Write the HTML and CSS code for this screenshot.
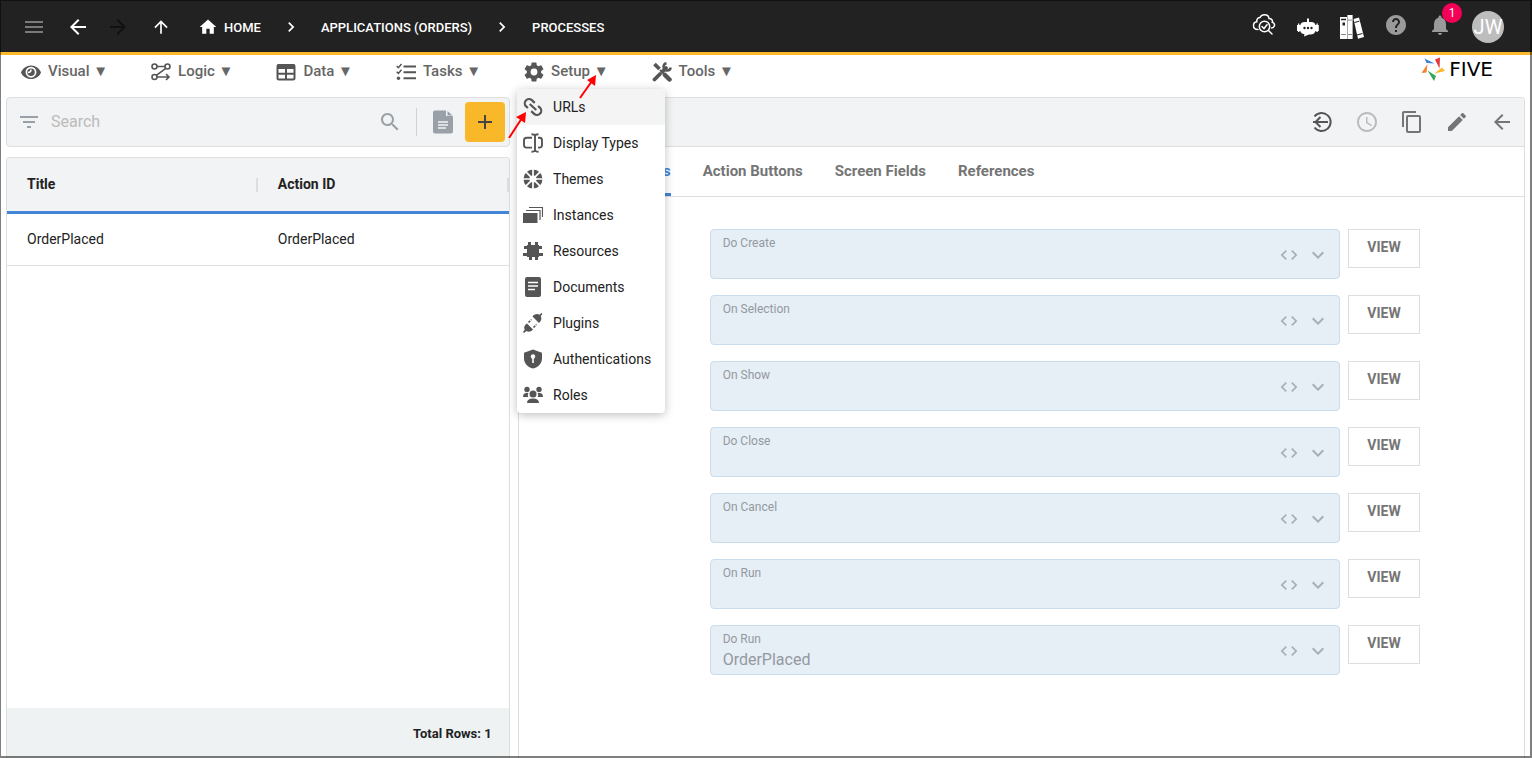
FILE: index.html
```html
<!DOCTYPE html>
<html lang="en">
<head>
    <meta charset="UTF-8">
    <meta name="viewport" content="width=device-width, initial-scale=1.0">
    <title>Processes</title>
    <link rel="stylesheet" href="styles.css">
</head>
<body>

    <!-- Shared icons -->
    <svg class="sprite" aria-hidden="true">
        <symbol id="i-back" viewBox="0 0 24 24"><path d="M20 11H7.83l5.59-5.59L12 4l-8 8 8 8 1.41-1.41L7.83 13H20v-2z"/></symbol>
        <symbol id="i-chevron" viewBox="0 0 24 24"><path d="M10 6L8.59 7.41 13.17 12l-4.58 4.59L10 18l6-6z"/></symbol>
        <symbol id="i-code" viewBox="0 0 24 24"><path d="M9.4 16.6L4.8 12l4.6-4.6L8 6l-6 6 6 6 1.4-1.4zm5.2 0l4.6-4.6-4.6-4.6L16 6l6 6-6 6-1.4-1.4z"/></symbol>
        <symbol id="i-expand" viewBox="0 0 24 24"><path d="M16.59 8.59L12 13.17 7.41 8.59 6 10l6 6 6-6z"/></symbol>
    </svg>

    <header class="topbar">
        <button class="top-btn dim" aria-label="Menu"><svg class="icon24" viewBox="0 0 24 24"><path d="M3 18h18v-2H3v2zm0-5h18v-2H3v2zm0-7v2h18V6H3z"/></svg></button>
        <button class="top-btn" aria-label="Back"><svg class="icon24"><use href="#i-back"/></svg></button>
        <button class="top-btn narrow off" aria-label="Forward"><svg class="icon24" viewBox="0 0 24 24"><path d="M12 4l-1.41 1.41L16.17 11H4v2h12.17l-5.58 5.59L12 20l8-8z"/></svg></button>
        <button class="top-btn wide" aria-label="Up"><svg class="icon20" viewBox="0 0 24 24"><path d="M4 12l1.41 1.41L11 7.83V20h2V7.83l5.58 5.59L20 12l-8-8-8 8z"/></svg></button>
        <nav class="crumbs">
            <a class="crumb" href="#"><svg class="icon20" viewBox="0 0 24 24"><path d="M10 20v-6h4v6h5v-8h3L12 3 2 12h3v8z"/></svg>HOME</a>
            <svg class="icon20"><use href="#i-chevron"/></svg>
            <a class="crumb" href="#">APPLICATIONS (ORDERS)</a>
            <svg class="icon20"><use href="#i-chevron"/></svg>
            <a class="crumb" href="#">PROCESSES</a>
        </nav>
        <div class="top-actions">
            <button class="top-btn raised" aria-label="Inspect">
                <svg class="icon24" viewBox="0 0 24 24"><g fill="none" stroke="currentColor" stroke-width="1.5" stroke-linecap="round">
                    <path d="M6 16.500C3 16.500 1.500 14.500 1.500 12.500 1.500 10.500 3 9 4.800 8.800 4.500 6 6 4.500 8 4.500 9 2.500 10.500 1.700 12.500 1.700 15 1.700 16.800 3.300 17 5.500 19.500 5.500 21 7.500 20.300 9.300 22.500 10 23 12 22 13.500 21.500 14.500 20.500 15 19.500 15"/>
                    <circle cx="12.500" cy="13.500" r="5.200"/><path d="M16.500 17.500L20 21M10 13.500l2 2 3-3.800"/></g></svg>
            </button>
            <button class="top-btn" aria-label="Assistant">
                <svg class="icon24" viewBox="0 0 24 24"><path d="M11 3.500h2V7h2.500c2.200 0 3.500 1.300 4 3h1v-1.500h1.300V10h1v6h-1v1h-1.500v-1h-.8c-.7 2.500-2.500 3.500-5 3.500H13l-5 2 .500-2.300C6 18.900 4.800 18 4.300 16h-.8v1H2v-1H1v-6h1V8.500h1.300V10h1c.5-1.700 2-3 4.200-3H11z"/><g fill="#222"><circle cx="8.500" cy="13" r="1.200"/><circle cx="12" cy="13" r="1.200"/><circle cx="15.500" cy="13" r="1.200"/></g></svg>
            </button>
            <button class="top-btn" aria-label="Library">
                <svg class="icon24" viewBox="0 0 24 24"><path d="M0 2h7v22H0z"/><path d="M7 0h6v24H7z" fill="#aaa"/><path d="M8 0h4v24H8z"/><path d="M13.500 4l5.500-1.500 5 19.500-6 1.700z"/><g fill="none" stroke="#222"><path d="M1 4.500h5" stroke-width="1.500"/><path d="M1 19.500h5M8 5h4M8 19.500h4" stroke="#888"/><path d="M14.300 7.500l5-1.300M17 20l5.500-1.500"/></g><path d="M2.500 7.500h2.500v3H2.500z" fill="#222"/></svg>
            </button>
            <button class="top-btn mid raised" aria-label="Help"><svg class="icon24" viewBox="0 0 24 24"><path d="M12 2C6.480 2 2 6.480 2 12s4.480 10 10 10 10-4.480 10-10S17.520 2 12 2zm1 17h-2v-2h2v2zm2.070-7.750l-.9.920C13.450 12.900 13 13.500 13 15h-2v-.5c0-1.100.45-2.100 1.170-2.830l1.240-1.260c.37-.36.59-.86.59-1.410 0-1.100-.9-2-2-2s-2 .9-2 2H8c0-2.210 1.790-4 4-4s4 1.790 4 4c0 .88-.36 1.680-.93 2.250z"/></svg></button>
            <button class="top-btn mid raised" aria-label="Notifications">
                <svg class="icon24" viewBox="0 0 24 24"><path d="M12 22c1.100 0 2-.9 2-2h-4c0 1.100.89 2 2 2zm6-6v-5c0-3.070-1.640-5.640-4.500-6.320V4c0-.83-.67-1.500-1.500-1.500s-1.500.67-1.500 1.500v.68C7.630 5.360 6 7.920 6 11v5l-2 2v1h16v-1l-2-2z"/></svg>
                <span class="badge">1</span>
            </button>
            <button class="avatar">JW</button>
        </div>
    </header>

    <nav class="menubar">
        <button class="menu-btn">
            <svg class="icon20" viewBox="0 0 20 20"><path d="M10 3.500C5.500 3.500 1.500 6.500 0 10.500c1.500 4 5.500 6.500 10 6.500s8.500-2.500 10-6.500C18.500 6.500 14.500 3.500 10 3.500z"/><circle cx="10" cy="10.200" r="4.600" fill="none" stroke="#fff" stroke-width="1.700"/><path d="M10 7.500a3 3 0 0 1-3 3" fill="none" stroke="#fff" stroke-width="1.500"/></svg>
            <span>Visual ▼</span>
        </button>
        <button class="menu-btn">
            <svg class="icon20" viewBox="0 0 20 20"><g fill="none" stroke="currentColor" stroke-width="1.600"><circle cx="3.500" cy="4.500" r="2.500"/><circle cx="16.500" cy="4.500" r="2.500"/><circle cx="3.500" cy="15" r="2.500"/><path d="M6 4.500h8M14.800 6.300L5.300 13.300M6 15h12M15 12l3 3-3 3"/></g></svg>
            <span>Logic ▼</span>
        </button>
        <button class="menu-btn">
            <svg class="icon20" viewBox="0 0 20 20"><rect x="1.500" y="3" width="17" height="14.500" rx="1.500" fill="none" stroke="currentColor" stroke-width="2"/><path d="M1.500 2h17v5h-17z"/><path d="M10 6v11M2 11.800h16" fill="none" stroke="currentColor" stroke-width="2"/></svg>
            <span>Data ▼</span>
        </button>
        <button class="menu-btn">
            <svg class="icon20" viewBox="0 0 20 20"><g fill="none" stroke="currentColor" stroke-width="1.900"><path d="M7.500 4.500H20M7.500 10.300H20M7.500 16.200H20"/><path d="M.7 4l1.700 1.700L5.500 2M.7 9.700l1.700 1.700 3.100-3.700" stroke-width="1.500"/></g><circle cx="2.500" cy="16.200" r="1.700"/></svg>
            <span>Tasks ▼</span>
        </button>
        <div class="menu-wrap">
            <button class="menu-btn" aria-expanded="true">
                <svg class="icon20" viewBox="2 2 20 20"><path d="M19.140 12.940c.04-.3.06-.61.06-.94 0-.32-.02-.64-.07-.94l2.030-1.580c.18-.14.23-.41.12-.61l-1.920-3.320c-.12-.22-.37-.29-.59-.22l-2.390.96c-.5-.38-1.030-.7-1.620-.94l-.36-2.540c-.04-.24-.24-.41-.48-.41h-3.840c-.24 0-.43.17-.47.41l-.36 2.540c-.59.24-1.130.57-1.620.94l-2.390-.96c-.22-.08-.47 0-.59.22L2.740 8.870c-.12.21-.08.47.12.61l2.030 1.580c-.05.3-.09.63-.09.94s.02.64.07.94l-2.030 1.580c-.18.14-.23.41-.12.61l1.920 3.320c.12.22.37.29.59.22l2.390-.96c.5.38 1.030.7 1.620.94l.36 2.540c.05.24.24.41.48.41h3.840c.24 0 .44-.17.47-.41l.36-2.540c.59-.24 1.130-.56 1.620-.94l2.390.96c.22.08.47 0 .59-.22l1.920-3.320c.12-.22.07-.47-.12-.61l-2.010-1.580zM12 15.400a3.400 3.400 0 1 1 0-6.800 3.400 3.400 0 0 1 0 6.800z"/></svg>
                <span>Setup ▼</span>
            </button>
            <div class="dropdown">
                <a class="drop-item active" href="#">
                    <svg class="icon20" viewBox="0 0 20 20"><path transform="translate(10 10) rotate(43)" fill="none" stroke="currentColor" stroke-width="2.200" d="M-1.500-4.200H-5.500a4.200 4.200 0 0 0 0 8.400H-3M1.500 4.200H5.500a4.200 4.200 0 0 0 0-8.400H3M-4.500 0H4.500"/></svg>URLs</a>
                <a class="drop-item" href="#">
                    <svg class="icon20" viewBox="0 0 20 20"><g fill="none" stroke="currentColor" stroke-width="1.900"><path d="M9 4.800H3.500Q1 4.800 1 7.300v4.800q0 2.500 2.500 2.500H9M15 4.800h1.500Q19 4.800 19 7.300v4.800q0 2.500-2.500 2.500H15M12 2v16M8.500 1.200q3 0 3.500 1.500.5-1.500 3.500-1.500M8.500 18.800q3 0 3.500-1.500.5 1.500 3.500 1.500"/></g></svg>Display Types</a>
                <a class="drop-item" href="#">
                    <svg class="icon20" viewBox="0 0 20 20"><circle cx="10" cy="10" r="6.500" fill="none" stroke="currentColor" stroke-width="6"/><path d="M10 0v20M0 10h20M2.900 2.900l14.200 14.200M2.900 17.100L17.100 2.900" stroke="#fff" stroke-width="1.700"/></svg>Themes</a>
                <a class="drop-item" href="#">
                    <svg class="icon20" viewBox="0 0 20 20"><path d="M0 8h14.500v10H0z"/><path d="M3 5.500h14V15M6 2.500h13.500V12" fill="none" stroke="currentColor" stroke-width="1.200"/></svg>Instances</a>
                <a class="drop-item" href="#">
                    <svg class="icon20" viewBox="0 0 20 20"><path d="M4 4h12v12H4zM5 1h3v4H5zM12 1h3v4h-3zM6 15h3v4H6zM12 15h3v4h-3zM1 5h4v3H1zM0 12h5v3H0zM15 5h4v3h-4zM15 12h5v3h-5z"/></svg>Resources</a>
                <a class="drop-item" href="#">
                    <svg class="icon20" viewBox="0 0 20 20"><rect x="2" width="16" height="20" rx="2"/><path d="M5 5.500h10M5 9h10M5 12.500h7" stroke="#fff" stroke-width="1.400"/></svg>Documents</a>
                <a class="drop-item" href="#">
                    <svg class="icon20" viewBox="0 0 20 20"><path d="M9.500 3.500c2-2.500 5-3 7-1.800L18.500 0l1 1-1.800 2c1.300 2 .8 5-1.700 7zM4 10.500l6 6c-2 2.300-4.800 2.700-6.700 1.500L1 20l-1-1 1.700-2.300C.5 14.500 1.500 12 4 10.500z"/><path d="M5.500 9.500l3-3M10.500 14.500l3-3" stroke="currentColor" stroke-width="1.600" stroke-dasharray="2.500 1"/></svg>Plugins</a>
                <a class="drop-item" href="#">
                    <svg class="icon20" viewBox="0 0 20 20"><path d="M10 .5l9 3.300v5.700c0 5-4 8.800-9 10-5-1.200-9-5-9-10V3.800z"/><circle cx="10" cy="7.500" r="2.200" fill="#fff"/><path d="M9.200 8h1.600v6H9.200z" fill="#fff"/></svg>Authentications</a>
                <a class="drop-item" href="#">
                    <svg class="icon20" viewBox="0 0 20 20"><circle cx="4" cy="4.500" r="2.700"/><circle cx="16" cy="4.500" r="2.700"/><path d="M0 12c0-2.500 1.300-4 3.500-4h2c-1 1.500-.8 3 0 4zM20 12c0-2.500-1.300-4-3.500-4h-2c1 1.500.8 3 0 4zM4 18c0-3 2-4.500 6-4.500s6 1.500 6 4.500z"/><circle cx="10" cy="9" r="3.500"/></svg>Roles</a>
            </div>
        </div>
        <button class="menu-btn">
            <svg class="icon20" viewBox="0 0 20 20"><g fill="none" stroke="currentColor"><path d="M2.500 2l5 5" stroke-width="3.800"/><path d="M8 8l9.500 9.500" stroke-width="2"/><path d="M13 13l4.500 4.500" stroke-width="4.500" stroke-linecap="round"/><path d="M2.500 17.500L8 12M11 9l3-3" stroke-width="3.800" stroke-linecap="round"/><path d="M18.700 5.500A3.600 3.600 0 1 1 14.500 1.300" stroke-width="2.500"/></g></svg>
            <span>Tools ▼</span>
        </button>
        <a class="logo" href="#">
            <svg class="icon24" viewBox="0 0 24 24"><path d="M3.500 1.500l2 4.500 8 .5z" fill="#3f7fd5"/><path d="M19 .5l-5 2 4.500 9z" fill="#e5383b"/><path d="M24 14l-3-3.500-7.500 6z" fill="#fbb829"/><path d="M6.500 13.500L13 24l2-5z" fill="#34a853"/><path d="M6.500 7L.5 16l5-.5z" fill="#f9802d"/></svg>
            FIVE
        </a>
    </nav>

    <main class="content">
        <section class="list-side">
            <div class="search-bar">
                <svg class="icon24" viewBox="0 0 24 24"><path d="M10 18h4v-2h-4v2zM3 6v2h18V6H3zm3 7h12v-2H6v2z"/></svg>
                <input class="search-input" type="text" placeholder="Search" aria-label="Search">
                <button class="plain-btn" aria-label="Find"><svg class="icon24" viewBox="0 0 24 24"><path d="M15.500 14h-.79l-.28-.27C15.410 12.590 16 11.110 16 9.500 16 5.910 13.090 3 9.500 3S3 5.910 3 9.500 5.910 16 9.500 16c1.610 0 3.090-.59 4.230-1.570l.27.28v.79l5 4.990L20.490 19l-4.990-5zm-6 0C7.010 14 5 11.990 5 9.500S7.010 5 9.500 5 14 7.010 14 9.500 11.990 14 9.500 14z"/></svg></button>
                <span class="divider"></span>
                <button class="plain-btn" aria-label="Report"><svg class="icon24" viewBox="0 0 24 24"><path d="M4 .5h11V6h6.500l.5 1v14.500q0 2-2 2H4q-2 0-2-2v-19q0-2 2-2z"/><path d="M16.500 1l5 4.500h-5z"/><path d="M7 12h10M7 15h10M7 18h8" stroke="#f1f3f4" stroke-width="1.300"/></svg></button>
                <button class="add-btn" aria-label="Add"><svg class="icon24" viewBox="0 0 24 24"><path d="M19 13h-6v6h-2v-6H5v-2h6V5h2v6h6v2z"/></svg></button>
            </div>
            <div class="list-panel">
                <table class="list">
                    <thead>
                        <tr><th>Title</th><th>Action ID</th></tr>
                    </thead>
                    <tbody>
                        <tr><td>OrderPlaced</td><td>OrderPlaced</td></tr>
                    </tbody>
                </table>
                <div class="list-footer">Total Rows: 1</div>
            </div>
        </section>

        <section class="detail">
            <div class="detail-bar">
                <button class="tool-btn dark" aria-label="Revert"><svg class="icon24" viewBox="0 0 24 24"><path d="M4.500 6.500A9 9 0 1 1 4.500 17.500M3 12H18M10.500 7l-5 5 5 5" fill="none" stroke="currentColor" stroke-width="2"/></svg></button>
                <button class="tool-btn light" aria-label="History"><svg class="icon24" viewBox="0 0 24 24"><path d="M11.990 2C6.470 2 2 6.480 2 12s4.470 10 9.990 10C17.520 22 22 17.520 22 12S17.520 2 11.990 2zM12 20c-4.420 0-8-3.580-8-8s3.580-8 8-8 8 3.580 8 8-3.580 8-8 8zm.5-13H11v6l5.250 3.150.75-1.230-4.500-2.670z"/></svg></button>
                <button class="tool-btn" aria-label="Copy"><svg class="icon24" viewBox="0 0 24 24"><path d="M16 1H4c-1.100 0-2 .9-2 2v14h2V3h12V1zm3 4H8c-1.100 0-2 .9-2 2v14c0 1.100.9 2 2 2h11c1.100 0 2-.9 2-2V7c0-1.100-.9-2-2-2zm0 16H8V7h11v14z"/></svg></button>
                <button class="tool-btn" aria-label="Edit"><svg class="icon24" viewBox="0 0 24 24"><path d="M3 17.250V21h3.750L17.810 9.940l-3.750-3.750L3 17.250zM20.710 7.040c.39-.39.39-1.020 0-1.410l-2.340-2.340c-.39-.39-1.020-.39-1.410 0l-1.830 1.830 3.750 3.750 1.830-1.830z"/></svg></button>
                <button class="tool-btn" aria-label="Close"><svg class="icon24"><use href="#i-back"/></svg></button>
            </div>
            <div class="tabs" role="tablist">
                <button class="tab selected" role="tab" aria-selected="true">Events</button>
                <button class="tab" role="tab">Action Buttons</button>
                <button class="tab" role="tab">Screen Fields</button>
                <button class="tab" role="tab">References</button>
            </div>
            <form class="fields">
                <div class="row">
                    <div class="field">
                        <div class="field-text"><label for="doCreate">Do Create</label><select id="doCreate" disabled><option></option></select></div>
                        <svg class="icon20"><use href="#i-code"/></svg><svg class="icon24"><use href="#i-expand"/></svg>
                    </div>
                    <button class="view-btn" type="button">VIEW</button>
                </div>
                <div class="row">
                    <div class="field">
                        <div class="field-text"><label for="onSelection">On Selection</label><select id="onSelection" disabled><option></option></select></div>
                        <svg class="icon20"><use href="#i-code"/></svg><svg class="icon24"><use href="#i-expand"/></svg>
                    </div>
                    <button class="view-btn" type="button">VIEW</button>
                </div>
                <div class="row">
                    <div class="field">
                        <div class="field-text"><label for="onShow">On Show</label><select id="onShow" disabled><option></option></select></div>
                        <svg class="icon20"><use href="#i-code"/></svg><svg class="icon24"><use href="#i-expand"/></svg>
                    </div>
                    <button class="view-btn" type="button">VIEW</button>
                </div>
                <div class="row">
                    <div class="field">
                        <div class="field-text"><label for="doClose">Do Close</label><select id="doClose" disabled><option></option></select></div>
                        <svg class="icon20"><use href="#i-code"/></svg><svg class="icon24"><use href="#i-expand"/></svg>
                    </div>
                    <button class="view-btn" type="button">VIEW</button>
                </div>
                <div class="row">
                    <div class="field">
                        <div class="field-text"><label for="onCancel">On Cancel</label><select id="onCancel" disabled><option></option></select></div>
                        <svg class="icon20"><use href="#i-code"/></svg><svg class="icon24"><use href="#i-expand"/></svg>
                    </div>
                    <button class="view-btn" type="button">VIEW</button>
                </div>
                <div class="row">
                    <div class="field">
                        <div class="field-text"><label for="onRun">On Run</label><select id="onRun" disabled><option></option></select></div>
                        <svg class="icon20"><use href="#i-code"/></svg><svg class="icon24"><use href="#i-expand"/></svg>
                    </div>
                    <button class="view-btn" type="button">VIEW</button>
                </div>
                <div class="row">
                    <div class="field">
                        <div class="field-text"><label for="doRun">Do Run</label><select id="doRun" disabled><option>OrderPlaced</option></select></div>
                        <svg class="icon20"><use href="#i-code"/></svg><svg class="icon24"><use href="#i-expand"/></svg>
                    </div>
                    <button class="view-btn" type="button">VIEW</button>
                </div>
            </form>
        </section>
    </main>

    <!-- Red pointer arrows -->
    <svg class="pointers" viewBox="0 0 90 66">
        <g stroke="#f00" stroke-width="2" fill="#f00">
            <path d="M72 26L84 9"/><path d="M88 3l-1 11-8-6z" stroke="none"/>
            <path d="M1 66L14 46"/><path d="M18 40l-1 11-9-6z" stroke="none"/>
        </g>
    </svg>
    <div class="frame"></div>

</body>
</html>
```

FILE: styles.css
```css
* {
    box-sizing: border-box;
}
body {
    margin: 0;
    height: 100vh;
    display: flex;
    flex-direction: column;
    overflow: hidden;
    background-color: #fff;
    font-family: Roboto, sans-serif;
    font-size: 14px;
    color: #222;
}
button {
    padding: 0;
    border: none;
    background: none;
    font-family: inherit;
    color: inherit;
    cursor: pointer;
}
a {
    color: inherit;
    text-decoration: none;
}
svg {
    display: block;
    flex: none;
    fill: currentColor;
}
.sprite {
    position: absolute;
    width: 0;
    height: 0;
}
.icon20 {
    width: 20px;
    height: 20px;
}
.icon24 {
    width: 24px;
    height: 24px;
}

/* Top bar */
.topbar {
    flex: none;
    display: flex;
    align-items: center;
    height: 55px;
    padding: 2px 28px 0 12px;
    border-bottom: 3px solid #fbb829;
    background-color: #222;
    color: #fff;
}
.top-btn {
    position: relative;
    display: flex;
    justify-content: center;
    width: 44px;
}
.top-btn.narrow {
    width: 36px;
}
.top-btn.wide {
    width: 50px;
}
.top-btn.raised {
    padding-bottom: 4px;
}
.dim {
    color: #7a7a7a;
}
.off {
    color: #111;
}
.mid {
    color: #9a9a9a;
}
.crumbs {
    display: flex;
    align-items: center;
    gap: 20px;
    padding-left: 12px;
    font-size: 13px;
    font-weight: 500;
}
.crumb {
    display: flex;
    align-items: center;
    gap: 6px;
}
.top-actions {
    display: flex;
    align-items: center;
    margin-left: auto;
}
.badge {
    position: absolute;
    top: -10px;
    right: 0;
    width: 20px;
    height: 20px;
    border-radius: 50%;
    background-color: #f50057;
    color: #fff;
    font-size: 12px;
    line-height: 20px;
}
.avatar {
    width: 32px;
    height: 32px;
    margin-left: 10px;
    border-radius: 50%;
    background-color: #bdbdbd;
    color: #fff;
    font-size: 20px;
}

/* Menu bar */
.menubar {
    flex: none;
    display: flex;
    align-items: center;
    gap: 43px;
    height: 42px;
    padding: 0 39px 8px 21px;
    color: #555;
}
.menu-btn {
    display: flex;
    align-items: center;
    gap: 7px;
    height: 34px;
    font-size: 15px;
    font-weight: 500;
}
.menu-btn span {
    padding-bottom: 2px;
    color: #666;
}
.menu-wrap {
    position: relative;
}
.dropdown {
    position: absolute;
    top: 34px;
    left: -7px;
    z-index: 2;
    min-width: 148px;
    border-radius: 4px;
    background-color: #fff;
    color: #222;
    box-shadow: 0 2px 10px rgba(0, 0, 0, 0.25);
}
.drop-item {
    display: flex;
    align-items: center;
    gap: 10px;
    height: 36px;
    padding: 0 12px 0 6px;
    white-space: nowrap;
}
.drop-item svg {
    color: #555;
}
.drop-item.active {
    background-color: #f4f4f4;
}
.logo {
    display: flex;
    align-items: center;
    gap: 4px;
    margin-left: auto;
    padding-bottom: 6px;
    color: #000;
    font-family: "DejaVu Sans", sans-serif;
    font-size: 20px;
}

/* Content */
.content {
    flex: 1;
    display: grid;
    grid-template-columns: 1fr 2fr;
    gap: 8px;
    min-height: 0;
    padding: 0 7px 0 6px;
}
.list-side {
    display: flex;
    flex-direction: column;
    gap: 10px;
}
.search-bar {
    display: flex;
    align-items: center;
    height: 50px;
    padding: 0 4px 0 10px;
    border: 1px solid #dcdee0;
    border-radius: 4px;
    background-color: #f1f3f4;
    color: #9aa0a8;
}
.search-input {
    flex: 1;
    min-width: 0;
    padding: 0 10px 2px;
    border: none;
    background: none;
    font-family: inherit;
    font-size: 16px;
}
.search-input::placeholder {
    color: #bbb;
}
.divider {
    width: 1px;
    height: 28px;
    margin: 0 14px;
    background-color: #d0d2d4;
}
.add-btn {
    display: flex;
    align-items: center;
    justify-content: center;
    width: 40px;
    height: 40px;
    margin-left: 10px;
    border-radius: 4px;
    background-color: #f8b82a;
    color: #444;
}
.list-panel {
    flex: 1;
    display: flex;
    flex-direction: column;
    justify-content: space-between;
    border: 1px solid #dcdee0;
    border-bottom: none;
    border-radius: 4px 4px 0 0;
    overflow: hidden;
}
.list {
    width: 100%;
    table-layout: fixed;
    border-collapse: separate;
    border-spacing: 0;
    text-align: left;
}
.list th {
    height: 56px;
    padding: 0 0 2px 20px;
    border-bottom: 3px solid #4285d8;
    background: linear-gradient(#dcdee0, #dcdee0) right center / 2px 14px no-repeat #f1f3f4;
    font-weight: 700;
}
.list td {
    height: 52px;
    padding: 0 0 2px 20px;
    border-bottom: 1px solid #e0e0e0;
}
.list-footer {
    height: 50px;
    padding-right: 17px;
    background-color: #eef2f3;
    font-size: 13px;
    font-weight: 700;
    line-height: 52px;
    text-align: right;
}

/* Detail form */
.detail {
    border: 1px solid #dcdee0;
    border-bottom: none;
    border-radius: 4px 4px 0 0;
    overflow: hidden;
}
.detail-bar {
    display: flex;
    align-items: center;
    justify-content: flex-end;
    height: 49px;
    border-bottom: 1px solid #dcdee0;
    background-color: #f1f3f4;
    color: #757575;
}
.tool-btn {
    display: flex;
    justify-content: center;
    width: 45px;
}
.tool-btn.dark {
    color: #555;
}
.tool-btn.light {
    color: #bbb;
}
.tabs {
    display: flex;
    gap: 32px;
    height: 50px;
    padding-left: 107px;
    border-bottom: 1px solid #dcdee0;
}
.tab {
    padding-bottom: 2px;
    border-top: 3px solid transparent;
    border-bottom: 3px solid transparent;
    color: #757575;
    font-size: 15px;
    font-weight: 700;
}
.tab.selected {
    border-bottom-color: #4285d8;
    color: #4285d8;
}
.fields {
    display: flex;
    flex-direction: column;
    gap: 16px;
    padding: 32px 104px 0 191px;
}
.row {
    display: flex;
    align-items: flex-start;
    gap: 8px;
}
.field {
    flex: 1;
    display: flex;
    align-items: center;
    gap: 7px;
    height: 50px;
    padding: 2px 9px 0 12px;
    border: 1px solid #cbdcec;
    border-radius: 4px;
    background-color: #e6eef6;
    color: #a8aeb5;
}
.field-text {
    flex: 1;
    display: flex;
    flex-direction: column;
    height: 44px;
}
.field-text label {
    color: #9499a0;
    font-size: 12px;
    line-height: 20px;
}
.field-text select {
    height: 20px;
    padding: 0;
    border: none;
    background: none;
    appearance: none;
    opacity: 1;
    color: #9499a0;
    font-family: inherit;
    font-size: 16px;
}
.view-btn {
    width: 72px;
    height: 39px;
    padding-bottom: 4px;
    border: 1px solid #dcdee0;
    background-color: #fff;
    color: #757575;
    font-size: 14px;
    font-weight: 700;
}

/* Overlays */
.pointers {
    position: absolute;
    top: 72px;
    left: 508px;
    z-index: 3;
    width: 90px;
    height: 66px;
    pointer-events: none;
}
.frame {
    position: fixed;
    inset: 0;
    z-index: 4;
    border: 1px solid rgba(0, 0, 0, 0.5);
    border-width: 1px 2px 2px 1px;
    pointer-events: none;
}
```
